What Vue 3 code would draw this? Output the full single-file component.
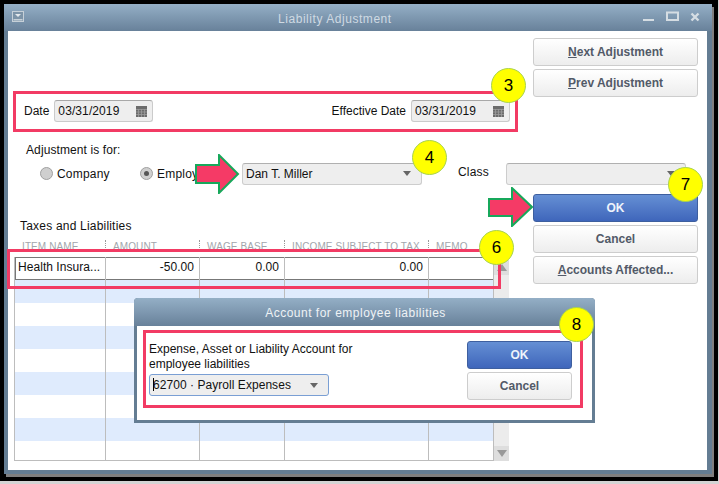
<script setup>
const rows = [
  { name: 'Health Insura...', amount: '-50.00', base: '0.00', income: '0.00', memo: '', kind: 'selected' },
  { kind: 'blue' }, { kind: 'white' }, { kind: 'blue' }, { kind: 'white' },
  { kind: 'blue' }, { kind: 'white' }, { kind: 'blue' }, { kind: 'white last' }
]
const headers = [
  { label: 'ITEM NAME', cls: 'c1' },
  { label: 'AMOUNT', cls: 'c2' },
  { label: 'WAGE BASE', cls: 'c3' },
  { label: 'INCOME SUBJECT TO TAX', cls: 'c4' },
  { label: 'MEMO', cls: 'c5' }
]
const badges = [
  { n: 3, cls: 'b3' }, { n: 4, cls: 'b4' }, { n: 6, cls: 'b6' }, { n: 7, cls: 'b7' }, { n: 8, cls: 'b8' }
]
</script>

<template>
  <div class="screen">
    <div class="frame">
      <div class="window">
        <div class="titlebar">
          <svg class="sys" width="12" height="12" viewBox="0 0 12 12">
            <rect x="0.5" y="0.5" width="11" height="10" fill="#7d94a8" stroke="#c6d0d8" />
            <rect x="1.5" y="8" width="9" height="1.500" fill="#c6d0d8" />
            <path d="M3 3h6L6 6z" fill="#e4e9ed" />
          </svg>
          <span class="win-title">Liability Adjustment</span>
          <div class="win-ctrl">
            <svg width="12" height="12" viewBox="0 0 12 12"><rect x="0" y="8" width="11" height="2" fill="#d5dde3" /></svg>
            <svg width="13" height="12" viewBox="0 0 13 12"><rect x="1" y="1.5" width="11" height="7.5" fill="none" stroke="#d5dde3" stroke-width="2" /></svg>
            <svg width="10" height="10" viewBox="0 0 10 10"><path d="M1.500 1.500l7 7M8.500 1.500l-7 7" stroke="#d5dde3" stroke-width="2.400" /></svg>
          </div>
        </div>

        <div class="body">
          <section class="sec-a">
            <div class="date-row">
              <label class="field">Date
                <span class="date-input">03/31/2019
                  <svg class="cal" width="11" height="11" viewBox="0 0 11 11">
                    <rect width="11" height="11" fill="#6c6c6c" />
                    <path d="M0 3.500h11M0 6h11M0 8.500h11M2.500 3v8M5.500 3v8M8.500 3v8" stroke="#9c9c9c" stroke-width="0.8" />
                  </svg>
                </span>
              </label>
              <label class="field">Effective Date
                <span class="date-input">03/31/2019
                  <svg class="cal" width="11" height="11" viewBox="0 0 11 11">
                    <rect width="11" height="11" fill="#6c6c6c" />
                    <path d="M0 3.500h11M0 6h11M0 8.500h11M2.500 3v8M5.500 3v8M8.500 3v8" stroke="#9c9c9c" stroke-width="0.8" />
                  </svg>
                </span>
              </label>
            </div>
            <div class="btn-col">
              <button class="btn"><u>N</u>ext Adjustment</button>
              <button class="btn"><u>P</u>rev Adjustment</button>
            </div>
          </section>

          <section class="sec-b">
            <div class="adj-label">Adjustment is for:</div>
            <div class="adj-row">
              <span class="radio-item first"><i class="radio"></i>Company</span>
              <span class="radio-item second"><i class="radio on"></i>Employee</span>
              <span class="combo wide"><span>Dan T. Miller</span><i class="caret"></i></span>
              <span class="class-label">Class</span>
              <span class="combo wide"><span></span><i class="caret"></i></span>
            </div>
          </section>

          <section class="sec-c">
            <div class="table-col">
              <div class="table-title">Taxes and Liabilities</div>
              <div class="thead">
                <span v-for="h in headers" :key="h.label" class="th" :class="h.cls">{{ h.label }}</span>
              </div>
              <div class="grid-wrap">
                <div class="tbody">
                  <div v-for="(r, i) in rows" :key="i" class="tr" :class="r.kind">
                    <span class="td c1">{{ r.name }}</span>
                    <span class="td c2 num">{{ r.amount }}</span>
                    <span class="td c3 num">{{ r.base }}</span>
                    <span class="td c4 num">{{ r.income }}</span>
                    <span class="td c5">{{ r.memo }}</span>
                  </div>
                </div>
                <div class="scroll">
                  <span class="sb-btn"><i class="sb-up"></i></span>
                  <span class="sb-btn low"><i class="sb-down"></i></span>
                </div>
              </div>
            </div>
            <div class="btn-col">
              <button class="btn primary">OK</button>
              <button class="btn">Cancel</button>
              <button class="btn"><u>A</u>ccounts Affected...</button>
            </div>
          </section>
        </div>
      </div>
    </div>

    <div class="dialog">
      <div class="dlg-title">Account for employee liabilities</div>
      <div class="dlg-body">
        <div class="dlg-left">
          <div class="dlg-label">Expense, Asset or Liability Account for<br />employee liabilities</div>
          <span class="combo focus"><span class="combo-text"><b class="text-caret"></b>62700 · Payroll Expenses</span><i class="caret"></i></span>
        </div>
        <div class="dlg-btns">
          <button class="btn primary">OK</button>
          <button class="btn">Cancel</button>
        </div>
      </div>
    </div>

    <div class="red r3"></div>
    <div class="red r6"></div>
    <div class="red r8"></div>

    <svg class="arrow a1" width="45" height="40" viewBox="0 0 45 40">
      <path d="M1 11H24V1L43 20L24 39V29H1Z" fill="#f53a66" stroke="#17a85b" stroke-width="2" />
    </svg>
    <svg class="arrow a2" width="45" height="40" viewBox="0 0 45 40">
      <path d="M1 12H24V1L44 20L24 39V29H1Z" fill="#f53a66" stroke="#17a85b" stroke-width="2" />
    </svg>

    <span v-for="b in badges" :key="b.n" class="badge" :class="b.cls">{{ b.n }}</span>
  </div>
</template>

<style scoped>
.screen {
  position: relative;
  width: 719px;
  height: 484px;
  overflow: hidden;
  background: #d4d4d4;
  font: 12px "Liberation Sans", Arial, sans-serif;
  color: #111;
}
.frame {
  width: 718px;
  height: 481px;
  box-sizing: border-box;
  padding: 4px 0 0 4px;
  background: #000;
}
.window {
  width: 708px;
  height: 470px;
  display: flex;
  flex-direction: column;
  background: #647d93;
  box-shadow: 2px 3px 0 #7f7f7f;
}
.titlebar {
  height: 27px;
  flex: none;
  display: flex;
  align-items: center;
  position: relative;
  padding: 0 12px 0 8px;
  background: linear-gradient(#94afc6, #68819a);
}
.sys { margin-top: -2px; }
.win-title {
  position: absolute;
  left: 274px;
  top: 8px;
  color: #cfdae3;
  letter-spacing: 0.55px;
}
.win-ctrl {
  margin-left: auto;
  display: flex;
  align-items: center;
  gap: 11px;
  margin-top: -1px;
}
.body {
  flex: 1;
  margin: 0 5px 4px 4px;
  background: #fff;
  display: flex;
  flex-direction: column;
}
.sec-a {
  height: 91px;
  box-sizing: border-box;
  padding: 7px 9px 0 16px;
  display: flex;
  justify-content: space-between;
}
.date-row {
  width: 486px;
  align-self: flex-end;
  display: flex;
  justify-content: space-between;
}
.field {
  display: flex;
  align-items: center;
  gap: 5px;
}
.date-input {
  position: relative;
  width: 99px;
  height: 22px;
  box-sizing: border-box;
  display: flex;
  align-items: center;
  padding-left: 3px;
  background: #eee;
  border: 1px solid #cbcbcb;
  border-top-color: #a8a8a8;
  border-radius: 3px;
  letter-spacing: 0.1px;
}
.cal {
  position: absolute;
  right: 5px;
  top: 5px;
}
.btn-col {
  width: 165px;
  display: flex;
  flex-direction: column;
  gap: 3px;
}
.btn {
  height: 28px;
  padding: 0;
  box-sizing: border-box;
  border: 1px solid #cdcdcd;
  border-radius: 3px;
  background: linear-gradient(#fff, #ededed);
  font: bold 12px "Liberation Sans", Arial, sans-serif;
  color: #525a68;
}
.btn.primary {
  background: linear-gradient(#658fd4, #3f66bb);
  border-color: #3e5f9f;
  color: #eef3fb;
}
.sec-b {
  margin-top: 21px;
  padding-left: 18px;
}
.adj-label {
  height: 15px;
  line-height: 15px;
  letter-spacing: 0.1px;
}
.adj-row {
  margin-top: 5px;
  display: flex;
  align-items: center;
  height: 21px;
  padding-left: 14px;
}
.radio-item {
  display: flex;
  align-items: center;
  gap: 4px;
  letter-spacing: 0.2px;
}
.radio-item.first { width: 100px; }
.radio-item.second { width: 102px; }
.radio {
  width: 13px;
  height: 13px;
  box-sizing: border-box;
  border-radius: 50%;
  border: 1px solid #a0a0a0;
  background: #cfcfcf;
  display: grid;
  place-items: center;
}
.radio.on::after {
  content: "";
  width: 5px;
  height: 5px;
  border-radius: 50%;
  background: #555;
}
.combo {
  width: 180px;
  height: 22px;
  box-sizing: border-box;
  display: flex;
  align-items: center;
  justify-content: space-between;
  padding: 0 10px 0 3px;
  background: #eee;
  border: 1px solid #cdcdcd;
  border-top-color: #b0b0b0;
  border-radius: 3px;
}
.combo.focus {
  border-color: #7a9fd4;
  margin-top: 2px;
}
.combo-text { letter-spacing: 0.05px; }
.caret {
  width: 0;
  height: 0;
  border-left: 4px solid transparent;
  border-right: 4px solid transparent;
  border-top: 5px solid #666;
}
.class-label {
  width: 48px;
  margin-left: 36px;
  margin-bottom: 4px;
  letter-spacing: 0.2px;
}
.sec-c {
  margin-top: 10px;
  flex: 1;
  display: flex;
  padding: 0 9px 9px 6px;
  justify-content: space-between;
}
.table-col {
  width: 495px;
  display: flex;
  flex-direction: column;
}
.table-title {
  margin-top: 25px;
  padding-left: 6px;
  height: 15px;
  line-height: 15px;
  letter-spacing: 0.2px;
}
.thead {
  margin-top: 6px;
  height: 17px;
  flex: none;
  display: flex;
  padding-left: 1px;
  font-size: 10px;
  color: #a2a6ac;
  letter-spacing: 0.1px;
}
.th {
  box-sizing: border-box;
  padding: 2px 0 0 7px;
  height: 10px;
  line-height: 10px;
  white-space: nowrap;
  border-right: 1px dotted #999;
}
.th.c5 { border-right: 0; }
.c1 { width: 91px; }
.c2 { width: 94px; }
.c3 { width: 85px; }
.c4 { width: 144px; }
.c5 { width: 65px; }
.grid-wrap {
  flex: 1;
  display: flex;
}
.tbody {
  width: 480px;
  box-sizing: border-box;
  display: flex;
  flex-direction: column;
  border-left: 1px solid #bdbdbd;
  border-bottom: 1px solid #bdbdbd;
}
.tr {
  height: 23px;
  flex: none;
  display: flex;
}
.tr.blue { background: #dfebfd; }
.tr.last { flex: 1; }
.tr.selected {
  box-shadow: inset 0 0 0 1px #777;
  position: relative;
}
.td {
  box-sizing: border-box;
  padding: 0 3px;
  line-height: 20px;
  border-right: 1px solid #bdbdbd;
  letter-spacing: 0.05px;
  white-space: nowrap;
}
.td.num {
  text-align: right;
  padding-right: 5px;
}
.scroll {
  width: 15px;
  margin-top: 3px;
  background: #ececec;
  display: flex;
  flex-direction: column;
  justify-content: space-between;
}
.sb-btn {
  height: 15px;
  background: #dedede;
  display: grid;
  place-items: center;
}
.sb-up {
  width: 0;
  height: 0;
  border-left: 5px solid transparent;
  border-right: 5px solid transparent;
  border-bottom: 7px solid #999;
}
.sb-down {
  width: 0;
  height: 0;
  border-left: 5px solid transparent;
  border-right: 5px solid transparent;
  border-top: 7px solid #999;
}
.dialog {
  position: absolute;
  left: 134px;
  top: 298px;
  width: 461px;
  height: 125px;
  box-sizing: border-box;
  display: flex;
  flex-direction: column;
  border-radius: 4px 4px 0 0;
  background: #647d93;
  padding: 0 3px 3px;
}
.dlg-title {
  height: 28px;
  flex: none;
  margin: 0 -3px;
  padding-right: 18px;
  border-radius: 4px 4px 0 0;
  background: linear-gradient(#94afc6, #68819a);
  color: #eef2f5;
  text-align: center;
  line-height: 30px;
  letter-spacing: 0.5px;
}
.dlg-body {
  flex: 1;
  background: #fff;
  display: flex;
  justify-content: space-between;
  padding: 15px 20px 0 12px;
}
.dlg-left { padding-top: 1px; }
.dlg-label { line-height: 15px; }
.dlg-btns {
  width: 105px;
  display: flex;
  flex-direction: column;
  gap: 3px;
}
.text-caret {
  display: inline-block;
  width: 1px;
  height: 13px;
  margin-right: -1px;
  vertical-align: -2px;
  background: #000;
}
.red {
  position: absolute;
  box-sizing: border-box;
  border: 3px solid #f23b64;
  pointer-events: none;
}
.r3 { left: 13px; top: 91px; width: 505px; height: 41px; }
.r6 { left: 7px; top: 249px; width: 494px; height: 40px; }
.r8 { left: 143px; top: 330px; width: 440px; height: 78px; }
.arrow { position: absolute; }
.a1 { left: 195px; top: 154px; }
.a2 { left: 488px; top: 187px; }
.badge {
  position: absolute;
  width: 35px;
  height: 35px;
  box-sizing: border-box;
  border-radius: 50%;
  background: #ffff00;
  border: 1px solid #a8d24f;
  text-align: center;
  font: 17px/33px "Liberation Sans", Arial, sans-serif;
  color: #000;
}
.b3 { left: 491px; top: 68px; }
.b4 { left: 412px; top: 140px; }
.b6 { left: 479px; top: 230px; }
.b7 { left: 668px; top: 167px; }
.b8 { left: 559px; top: 307px; }
</style>
